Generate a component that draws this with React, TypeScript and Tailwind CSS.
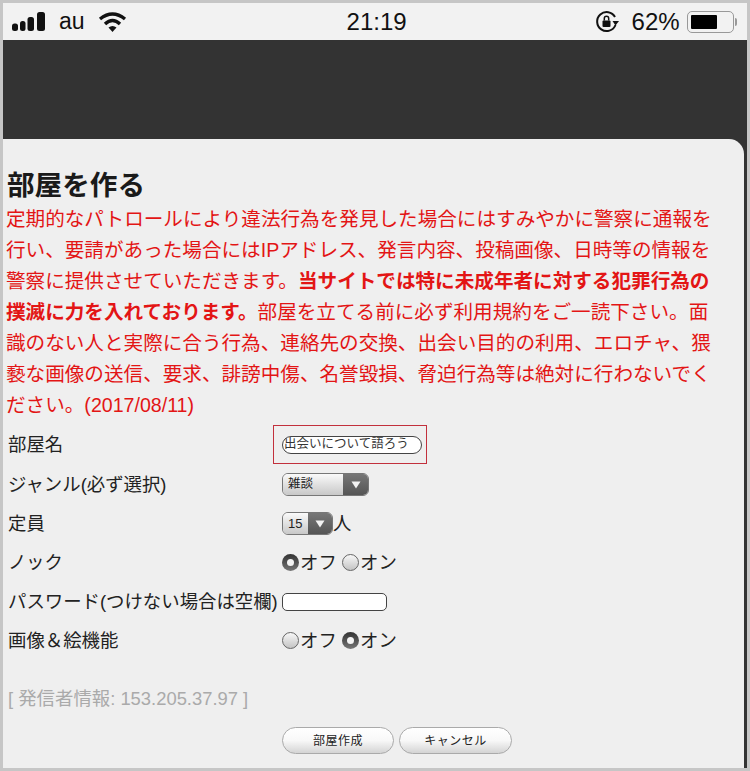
const fontStack = { fontFamily: '"Liberation Sans", "Noto Sans CJK JP", sans-serif' };

function StatusBar() {
  return (
    <div className="h-[37px] shrink-0 bg-[#f2f2f2] flex items-center text-[#111]">
      <svg width="34" height="22" viewBox="0 0 34 22" className="ml-[9px]">
        <rect x="0" y="12.500" width="6" height="7.500" rx="2.500" fill="#111" />
        <rect x="8" y="10" width="5.500" height="10" rx="2.500" fill="#111" />
        <rect x="15.500" y="6" width="6.500" height="14" rx="2.500" fill="#111" />
        <rect x="25" y="1" width="8" height="19" rx="2.500" fill="#111" />
      </svg>
      <span className="ml-[13px] text-[23px] leading-none">au</span>
      <svg width="30" height="22" viewBox="0 0 30 22" className="ml-[13px]">
        <path d="M2 8 Q14.500 -2 27 8" fill="none" stroke="#111" strokeWidth="3.400" />
        <path d="M7 13 Q14.500 6 22 13" fill="none" stroke="#111" strokeWidth="3.400" />
        <path d="M10.500 16.500 L14.500 21 L18.500 16.500 Q14.500 13.500 10.500 16.500 Z" fill="#111" />
      </svg>
      <span className="ml-[218px] w-[62px] text-[24px] font-medium leading-none text-center whitespace-nowrap">21:19</span>
      <svg width="25" height="24" viewBox="0 0 25 24" className="ml-[187px]">
        <path d="M20 7 A9.500 9.500 0 1 0 20.500 15" fill="none" stroke="#111" strokeWidth="2" />
        <path d="M17.500 11 L24 11 L20.500 15.500 Z" fill="#111" />
        <rect x="7.500" y="10.500" width="8" height="6.500" rx="1" fill="#111" />
        <path d="M9.300 10.500 V8.500 A2.200 2.200 0 0 1 13.700 8.500 V10.500" fill="none" stroke="#111" strokeWidth="1.500" />
      </svg>
      <span className="ml-[12px] w-[48px] text-[24px] leading-none whitespace-nowrap">62%</span>
      <div className="ml-[7px] w-[47px] h-[22px] rounded-[5px] border border-[#999] p-[3px] flex">
        <div className="w-[26px] bg-black rounded-[1px]" />
      </div>
      <div className="ml-[1px] w-[2px] h-[8px] bg-[#999] rounded-r" />
    </div>
  );
}

function Radio({ on }: { on?: boolean }) {
  return on ? (
    <span className="w-[17px] h-[17px] rounded-full bg-gradient-to-b from-[#333] to-[#777] flex items-center justify-center shrink-0">
      <span className="w-[7px] h-[7px] rounded-full bg-[#f4f4f4]" />
    </span>
  ) : (
    <span className="w-[17px] h-[17px] rounded-full border border-[#666] bg-gradient-to-b from-[#f8f8f8] to-[#c4c4c4] shrink-0" />
  );
}

function RadioPair({ value }: { value: 'off' | 'on' }) {
  return (
    <div className="flex items-center text-[18.400px] text-[#222]">
      <Radio on={value === 'off'} />
      <span className="ml-[1px] w-[42px]">オフ</span>
      <Radio on={value === 'on'} />
      <span className="ml-[1px]">オン</span>
    </div>
  );
}

function Select({ label, total, arrow, small }: { label: string; total: string; arrow: string; small?: boolean }) {
  return (
    <div className={`h-[23px] ${total} rounded-[6px] border border-[#777] overflow-hidden flex`}>
      <div className={`flex-1 bg-gradient-to-b from-[#fafafa] to-[#c8c8c8] flex items-center pl-[5px] text-[#222] ${small ? 'text-[13px]' : 'text-[12.5px]'}`}>
        {label}
      </div>
      <div className={`${arrow} bg-gradient-to-b from-[#777] to-[#555] flex items-center justify-center`}>
        <svg width="10" height="8" viewBox="0 0 10 8">
          <path d="M0.500 0.500 H9.500 L5 7.500 Z" fill="#f2f2f2" />
        </svg>
      </div>
    </div>
  );
}

function PillButton({ label, width }: { label: string; width: string }) {
  return (
    <button className={`h-[27px] ${width} rounded-full border border-[#aaa] bg-gradient-to-b from-white via-[#f8f8f8] to-[#d4d4d4] text-[12px] text-[#222] leading-none tracking-[0.5px]`}>
      {label}
    </button>
  );
}

function Row({ label, h, children }: { label: string; h: string; children: React.ReactNode }) {
  return (
    <div className={`${h} flex items-center`}>
      <div className="w-[279px] pl-[5px] text-[18.400px] text-[#222] whitespace-nowrap">{label}</div>
      {children}
    </div>
  );
}

export default function App() {
  return (
    <div style={fontStack} className="w-[750px] h-[771px] overflow-hidden bg-[#c6c6c6] p-[3px]">
      <div className="h-full flex flex-col bg-[#333]">
        <StatusBar />
        <div className="h-[99px] shrink-0 bg-[#333]" />
        <div className="flex-1 mr-[3px] bg-[#efefef] rounded-tr-[15px]">
          <h1 className="pt-[28px] pl-[4px] text-[27.600px] leading-[37px] font-bold text-[#1a1a1a]">部屋を作る</h1>
          <p className="pl-[3px] pr-[28px] text-[19.600px] leading-[31px] text-[#e31515]">
            定期的なパトロールにより違法行為を発見した場合にはすみやかに警察に通報を行い、要請があった場合にはIPアドレス、発言内容、投稿画像、日時等の情報を警察に提供させていただきます。
            <b>当サイトでは特に未成年者に対する犯罪行為の撲滅に力を入れております。</b>
            部屋を立てる前に必ず利用規約をご一読下さい。面識のない人と実際に合う行為、連絡先の交換、出会い目的の利用、エロチャ、猥褻な画像の送信、要求、誹謗中傷、名誉毀損、脅迫行為等は絶対に行わないでください。(2017/08/11)
          </p>
          <div className="mt-[3px]">
            <Row label="部屋名" h="h-[41px]">
              <div className="-ml-[9px] h-[39px] w-[154px] border border-[#c2303c] flex items-center pl-[8px]">
                <div className="h-[18px] w-[140px] rounded-[9px] border border-[#444] bg-white flex items-center pl-[1px] text-[12.5px] text-[#333] whitespace-nowrap">
                  出会いについて語ろう
                </div>
              </div>
            </Row>
            <Row label="ジャンル(必ず選択)" h="h-[39px]">
              <Select label="雑談" total="w-[87px]" arrow="w-[25px]" />
            </Row>
            <Row label="定員" h="h-[39px]">
              <Select label="15" total="w-[51px]" arrow="w-[24px]" small />
              <span className="text-[18.400px] text-[#222]">人</span>
            </Row>
            <Row label="ノック" h="h-[39px]">
              <RadioPair value="off" />
            </Row>
            <Row label="パスワード(つけない場合は空欄)" h="h-[39px]">
              <div className="h-[18px] w-[105px] rounded-[5px] border border-[#444] bg-white" />
            </Row>
            <Row label="画像＆絵機能" h="h-[39px]">
              <RadioPair value="on" />
            </Row>
          </div>
          <div className="mt-[27px] pl-[5px] text-[18.400px] leading-[24px] text-[#aaa] whitespace-nowrap">[ 発信者情報: 153.205.37.97 ]</div>
          <div className="mt-[16px] pl-[279px] flex gap-[5px]">
            <PillButton label="部屋作成" width="w-[112px]" />
            <PillButton label="キャンセル" width="w-[113px]" />
          </div>
        </div>
      </div>
    </div>
  );
}
